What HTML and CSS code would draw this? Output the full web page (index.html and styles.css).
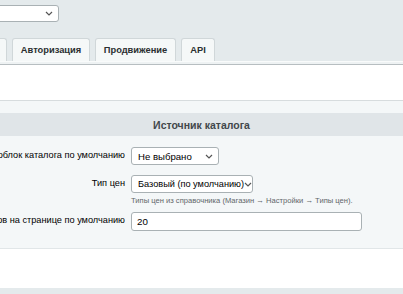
FILE: index.html
```html
<!DOCTYPE html>
<html lang="ru">
<head>
    <meta charset="utf-8">
    <title>Настройки модуля</title>
    <link rel="stylesheet" href="styles.css">
</head>
<body>
<div class="top">
    <div class="site-select">
        <span class="select-box top-select">
            <span class="select-text">Сайт по умолчанию</span>
            <svg class="chev" width="8" height="5" viewBox="0 0 8 5"><path d="M1 1l3 3 3-3" fill="none" stroke="#555" stroke-width="1.2"/></svg>
        </span>
    </div>
    <div class="tabs">
        <span class="tab tab-cut">Общие</span>
        <span class="tab">Авторизация</span>
        <span class="tab">Продвижение</span>
        <span class="tab">API</span>
    </div>
</div>
<div class="tabs-edge"></div>

<div class="blank"></div>

<div class="section">
    <div class="section-gap"></div>
    <div class="section-head">Источник каталога</div>

    <div class="row">
        <div class="label"><span>Инфоблок каталога по умолчанию</span></div>
        <div class="field">
            <span class="select-box sel-iblock">
                <span class="select-text">Не выбрано</span>
                <svg class="chev" width="8" height="5" viewBox="0 0 8 5"><path d="M1 1l3 3 3-3" fill="none" stroke="#555" stroke-width="1.2"/></svg>
            </span>
        </div>
    </div>

    <div class="row row-price">
        <div class="label"><span>Тип цен</span></div>
        <div class="field">
            <span class="select-box sel-price">
                <span class="select-text">Базовый (по умолчанию)</span>
                <svg class="chev" width="8" height="5" viewBox="0 0 8 5"><path d="M1 1l3 3 3-3" fill="none" stroke="#555" stroke-width="1.2"/></svg>
            </span>
            <div class="hint">Типы цен из справочника (Магазин → Настройки → Типы цен).</div>
        </div>
    </div>

    <div class="row">
        <div class="label"><span>Количество товаров на странице по умолчанию</span></div>
        <div class="field">
            <input class="text-input" type="text" value="20">
        </div>
    </div>
</div>

<div class="blank blank-bottom"></div>
<div class="footer-bg"></div>
</body>
</html>
```

FILE: styles.css
```css
body {
    margin: 0;
    padding: 0;
    font-family: 'Liberation Sans', Arial, sans-serif;
    font-size: 10px;
    color: #000;
    background-color: #e4eaec;
    overflow: hidden;
}

.top {
    background-color: #e4eaec;
    padding-top: 5px;
}

.site-select {
    display: flex;
    justify-content: flex-end;
    width: 59px;
    height: 17px;
}

.select-box {
    display: flex;
    align-items: center;
    justify-content: space-between;
    box-sizing: border-box;
    background-color: #fff;
    border: 1px solid #a9b1b4;
    border-radius: 3px;
    padding: 0 5px 0 6px;
    flex-shrink: 0;
}

.top-select {
    width: 240px;
    height: 17px;
}

.select-text {
    white-space: nowrap;
    font-size: 9.6px;
}

.chev {
    flex-shrink: 0;
}

.tabs {
    display: flex;
    gap: 5px;
    margin-top: 16px;
    margin-left: -42px;
    height: 23px;
}

.tab {
    display: flex;
    align-items: center;
    justify-content: center;
    box-sizing: border-box;
    background-color: #f5f8f8;
    border: 1px solid #d0d7d9;
    border-bottom: none;
    border-radius: 3px 3px 0 0;
    font-weight: bold;
    font-size: 9.3px;
    color: #2b2f31;
    padding: 0 6px;
}

.tab:nth-child(2) { width: 78px; }
.tab:nth-child(3) { width: 81px; }
.tab:nth-child(4) { width: 34px; }
.tab-cut { width: 49px; }

.tabs-edge {
    background-color: #eef2f3;
    border-top: 1px solid #f9fbfb;
    border-bottom: 1px solid #b7bec1;
    box-sizing: border-box;
    height: 4px;
}

.blank {
    height: 35px;
    background-color: #fff;
    border-bottom: 1px solid #d7dcde;
}

.section {
    background-color: #f4f7f8;
    padding-bottom: 17px;
    border-bottom: 1px solid #e1e6e8;
}

.section-gap {
    height: 12px;
}

.section-head {
    height: 23px;
    background-color: #e0e5e8;
    display: flex;
    align-items: center;
    justify-content: center;
    font-weight: bold;
    font-size: 10.5px;
    color: #42484b;
    margin-bottom: 11px;
}

.row {
    display: flex;
    gap: 6px;
    align-items: flex-start;
    margin-bottom: 10px;
}

.row-price {
    margin-bottom: 7px;
}

.row:last-child {
    margin-bottom: 0;
}

.label {
    width: 125px;
    display: flex;
    justify-content: flex-end;
    flex-shrink: 0;
    white-space: nowrap;
    font-size: 9.2px;
    color: #000;
    padding-top: 3px;
}

.field {
    display: flex;
    flex-direction: column;
}

.sel-iblock {
    width: 88px;
    height: 18px;
}

.sel-price {
    width: 122px;
    height: 18px;
}

.sel-price .select-text {
    font-size: 9.2px;
}

.hint {
    margin-top: 3px;
    font-size: 7.6px;
    line-height: 9px;
    color: #5f6669;
    white-space: nowrap;
}

.text-input {
    box-sizing: border-box;
    width: 231px;
    height: 19px;
    border: 1px solid #a9b1b4;
    border-radius: 3px;
    padding: 0 5px;
    font-family: 'Liberation Sans', Arial, sans-serif;
    font-size: 9.8px;
    color: #000;
    background-color: #fff;
}

.blank-bottom {
    height: 39px;
    border-bottom: none;
}

.footer-bg {
    height: 10px;
    background-color: #e4eaec;
}
```
